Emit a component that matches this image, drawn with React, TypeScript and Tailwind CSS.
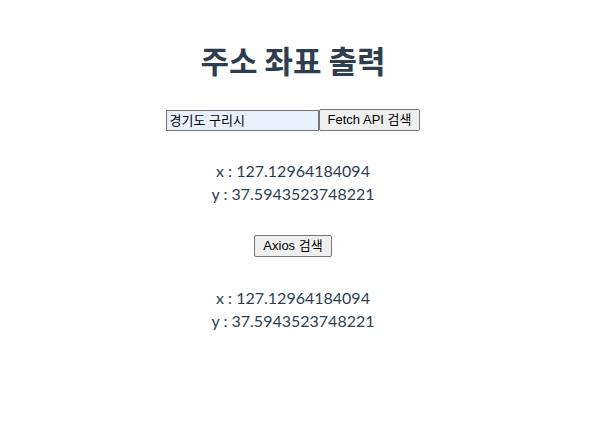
import React, { useState } from 'react';

const Coords = ({ x, y }: { x: string; y: string }) => (
  <div className="text-[16px] leading-[23px] text-[#2c3e50] [font-family:Lato,'Noto_Sans_CJK_KR',sans-serif]">
    <div>x : {x}</div>
    <div>y : {y}</div>
  </div>
);

const App: React.FC = () => {
  const [address, setAddress] = useState('경기도 구리시');
  const x = '127.12964184094';
  const y = '37.5943523748221';

  const btn =
    'h-[22px] px-[8px] border border-[#767676] rounded-[2px] bg-[#efefef] text-[13px] text-black [font-family:"Liberation_Sans","Noto_Sans_CJK_KR",sans-serif]';

  return (
    <div className="flex flex-col items-center text-center bg-white min-h-[446px] pr-[28px]">
      <h1 className="mt-[42px] text-[31px] leading-[36px] font-bold text-[#2c3e50] [font-family:'Noto_Sans_CJK_KR',sans-serif]">
        주소 좌표 출력
      </h1>

      <div className="mt-[31px] flex items-center justify-center">
        <input
          value={address}
          onChange={(e) => setAddress(e.target.value)}
          className="w-[153px] h-[21px] px-[3px] pb-[2px] border border-[#767676] bg-[#e8f0fe] text-[13px] text-black outline-none [font-family:'Liberation_Sans','Noto_Sans_CJK_KR',sans-serif]"
        />
        <button className={btn}>Fetch API 검색</button>
      </div>

      <div className="mt-[28px]">
        <Coords x={x} y={y} />
      </div>

      <button className={`mt-[30px] ${btn}`}>Axios 검색</button>

      <div className="mt-[29px]">
        <Coords x={x} y={y} />
      </div>
    </div>
  );
};

export default App;
